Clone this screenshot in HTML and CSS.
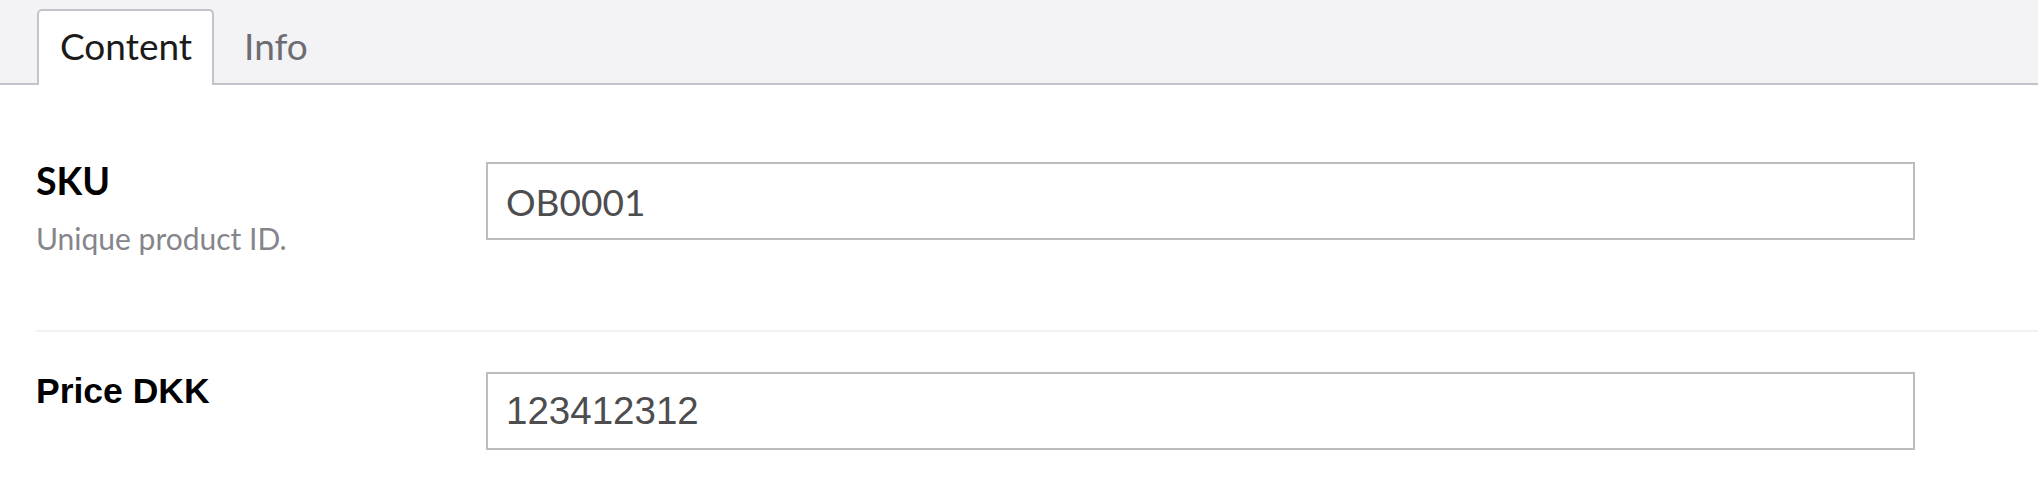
FILE: index.html
```html
<!DOCTYPE html>
<html lang="en">
<head>
<meta charset="utf-8">
<title>Product</title>
<link rel="stylesheet" href="styles.css">
</head>
<body>
<div class="tabbar">
  <div class="tab active">Content</div>
  <div class="tab">Info</div>
</div>
<div class="content">
  <div class="row">
    <div class="label-col">
      <div class="label lato">SKU</div>
      <div class="desc">Unique product ID.</div>
    </div>
    <div class="field">
      <div class="input lato-in">OB0001</div>
    </div>
  </div>
  <div class="row">
    <div class="label-col">
      <div class="label arial">Price DKK</div>
    </div>
    <div class="field">
      <div class="input arial-in">123412312</div>
    </div>
  </div>
</div>
</body>
</html>
```
FILE: styles.css
```css
html, body {
  margin: 0;
  padding: 0;
  background: #ffffff;
}
body {
  font-family: Lato, "Open Sans", sans-serif;
  color: #1b1b1b;
}
.tabbar {
  display: flex;
  align-items: flex-end;
  height: 83px;
  padding-left: 37px;
  background: #f3f3f5;
  border-bottom: 2px solid #c3c3cb;
}
.tab {
  box-sizing: border-box;
  height: 76px;
  margin-bottom: -2px;
  padding: 14px 20px 0 21px;
  border: 2px solid transparent;
  border-bottom: none;
  border-radius: 5px 5px 0 0;
  font-size: 37px;
  line-height: 42px;
  color: #6c6c72;
}
.tab.active {
  background: #ffffff;
  border-color: #c3c3cb;
  color: #1b1b1b;
  margin-right: 7px;
}
.content {
  padding: 37px 0 0 36px;
}
.row {
  display: grid;
  grid-template-columns: 450px 1429px;
  padding: 38px 0;
  border-bottom: 2px solid #f1f1f2;
}
.row:last-child {
  border-bottom: none;
}
.label {
  font-size: 37.5px;
  line-height: 42px;
  font-weight: 700;
  color: #000000;
}
.label.arial {
  font-family: "Liberation Sans", Arial, sans-serif;
  font-size: 35.5px;
}
.desc {
  margin-top: 16px;
  font-size: 30px;
  line-height: 40px;
  color: #85858c;
  padding-bottom: 34px;
}
.field {
  padding-top: 2px;
}
.input {
  box-sizing: border-box;
  height: 78px;
  border: 2px solid #bcbcc1;
  padding: 0 18px;
  display: flex;
  align-items: center;
  color: #4d4d4f;
}
.lato-in {
  font-family: Lato, sans-serif;
  font-size: 37px;
}
.arial-in {
  font-family: "Liberation Sans", Arial, sans-serif;
  font-size: 38.5px;
}
```
